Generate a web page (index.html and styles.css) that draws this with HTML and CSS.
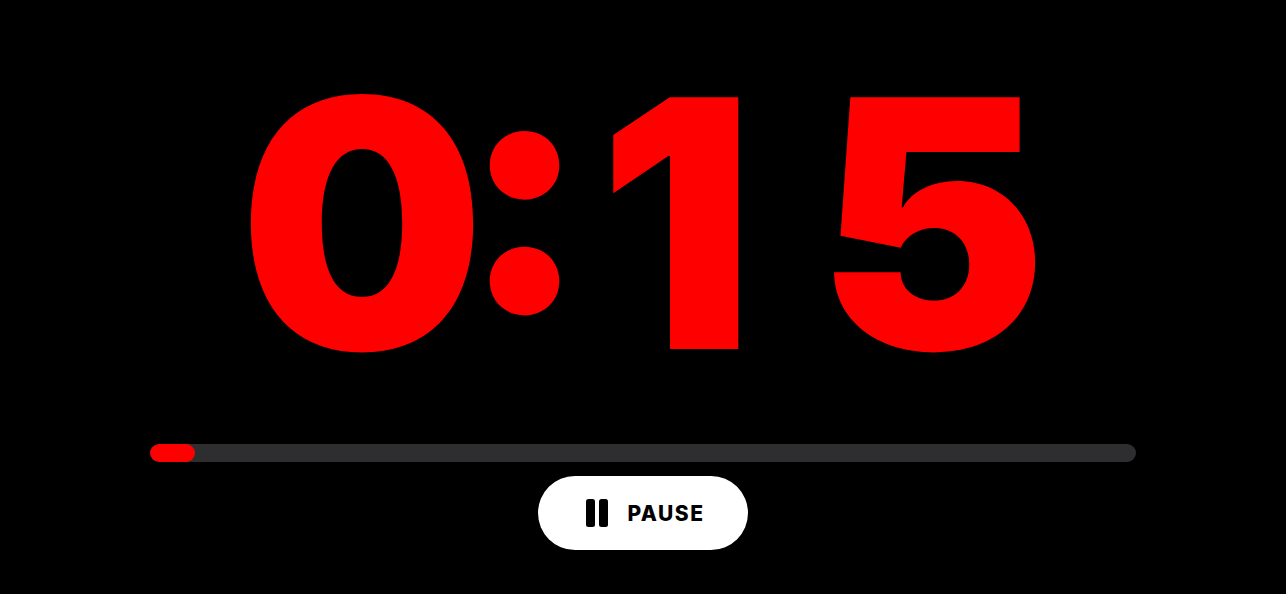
FILE: index.html
```html
<!DOCTYPE html>
<html>
<head>
<meta charset="utf-8">
<link rel="stylesheet" href="styles.css">
</head>
<body>
<main class="app">
  <div class="time"><span class="zero">0</span><span class="colon">:</span><span class="one">1</span><span class="five">5</span></div>
  <div class="track"><div class="fill" style="width:45px"></div></div>
  <button class="pause">
    <svg width="22" height="28" viewBox="0 0 22 28"><rect x="0" y="0" width="9" height="28" rx="2.5" fill="#000"/><rect x="13" y="0" width="9" height="28" rx="2.5" fill="#000"/></svg>
    <span>PAUSE</span>
  </button>
</main>
</body>
</html>
```
FILE: styles.css
```css
html, body {
  margin: 0;
  padding: 0;
  background: #000;
  width: 1286px;
  height: 594px;
  overflow: hidden;
}
.app {
  display: flex;
  flex-direction: column;
  align-items: center;
  font-family: Inter, "Liberation Sans", sans-serif;
}
.time {
  color: #ff0000;
  font-size: 346px;
  font-weight: 900;
  line-height: 1;
  height: 346px;
  margin-top: 50px;
  white-space: nowrap;
  font-kerning: none;
  padding-right: 0;
}
.zero { letter-spacing: -25px; }
.colon {
  font-feature-settings: "case" 1;
  letter-spacing: 9px;
}
.one { letter-spacing: 62px; }
.five { letter-spacing: 0; }
.track {
  width: 986px;
  height: 18px;
  border-radius: 9px;
  background: #2e2e30;
  margin-top: 48px;
  overflow: hidden;
}
.fill {
  height: 100%;
  background: #ff0000;
  border-radius: 9px;
}
.pause {
  margin-top: 14px;
  width: 210px;
  height: 74px;
  border: none;
  border-radius: 37px;
  background: #fff;
  display: flex;
  align-items: center;
  justify-content: center;
  gap: 19px;
  font-family: Inter, "Liberation Sans", sans-serif;
  font-weight: 800;
  font-size: 21px;
  color: #000;
  padding: 0 0 0 5px;
  letter-spacing: 1.5px;
}
```
